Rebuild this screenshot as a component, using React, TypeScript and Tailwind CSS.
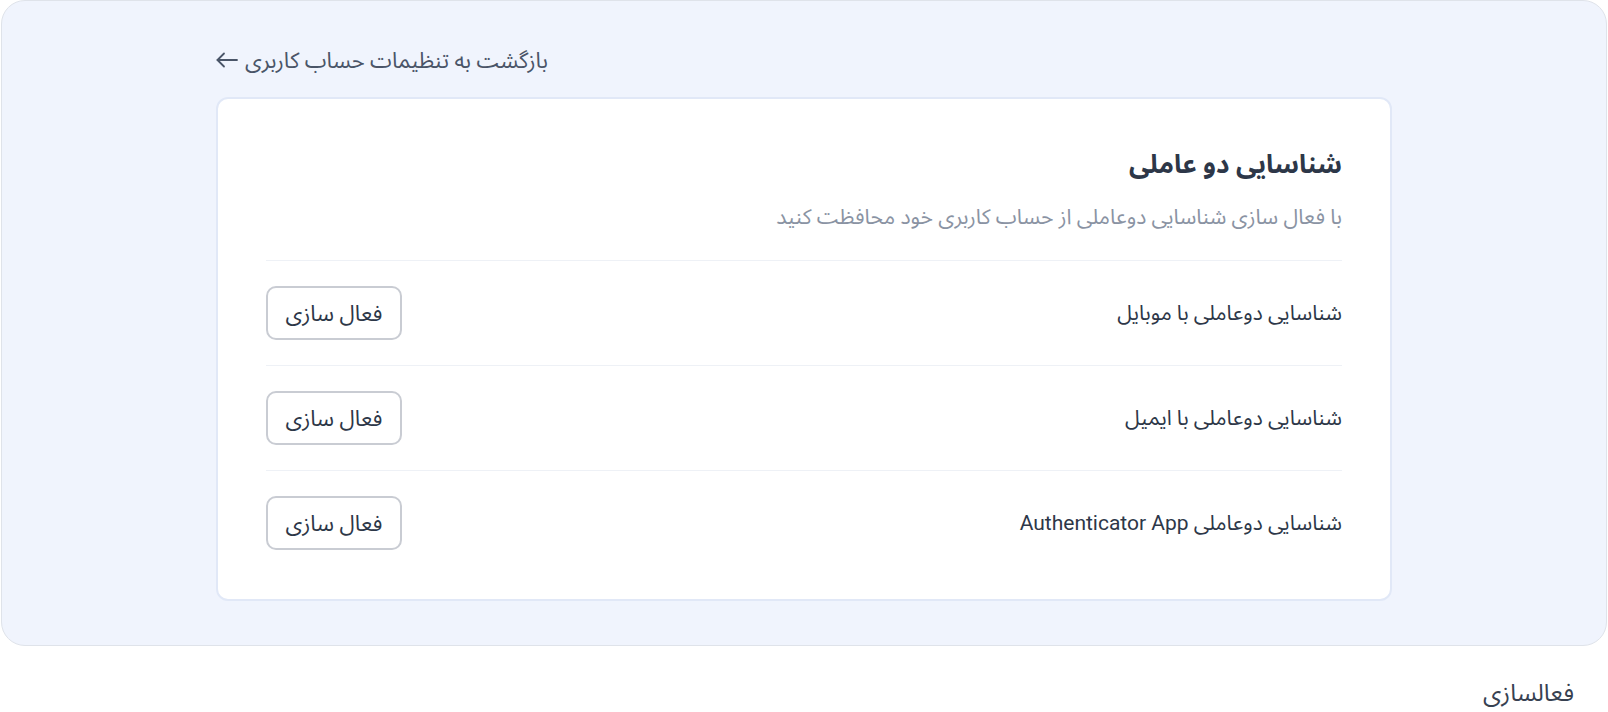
const methods = [
  'شناسایی دوعاملی با موبایل',
  'شناسایی دوعاملی با ایمیل',
  'شناسایی دوعاملی Authenticator App',
];

function BackArrow() {
  return (
    <svg width="22" height="16" viewBox="0 0 22 16" fill="none" stroke="currentColor" strokeWidth="1.8" strokeLinecap="round" strokeLinejoin="round">
      <path d="M21 8H1.5" />
      <path d="M8 1.5L1.5 8L8 14.5" />
    </svg>
  );
}

export default function App() {
  return (
    <div
      dir="rtl"
      className="min-h-[712px] bg-white text-[#2d3748]"
      style={{ fontFamily: 'Roboto, "Noto Sans Arabic", "DejaVu Sans", sans-serif' }}
    >
      <div className="mx-px h-[646px] rounded-[24px] border border-[#dfe3ea] bg-[#f0f4fd] pt-[45px]">
        <div className="mx-auto w-[1176px]">
          <div className="flex justify-end">
            <a className="flex h-7 items-center gap-[7px] text-[22px] text-[#4a5568]">
              <span>بازگشت به تنظیمات حساب کاربری</span>
              <BackArrow />
            </a>
          </div>

          <div className="mt-[23px] rounded-[12px] border-2 border-[#e1e8f7] bg-white px-12 pt-[49px] pb-[24px]">
            <h1 className="text-[26px] leading-8 font-bold text-[#2d3748]">شناسایی دو عاملی</h1>
            <p className="mt-[23px] text-[21.2px] leading-7 text-[#8a93a3]">
              با فعال سازی شناسایی دوعاملی از حساب کاربری خود محافظت کنید
            </p>

            <div className="mt-[29px] border-t border-[#eef1f6]">
              {methods.map((m, i) => (
                <div
                  key={m}
                  className={
                    'flex items-center justify-between py-[25px] ' +
                    (i < methods.length - 1 ? 'border-b border-[#eef1f6]' : '')
                  }
                >
                  <span className="text-[21px] leading-7 text-[#2d3748]">{m}</span>
                  <button
                    type="button"
                    className="flex h-[54px] w-[136px] items-center justify-center rounded-[10px] border-2 border-[#c9ccd3] text-[22px] text-[#2d3748]"
                  >
                    فعال سازی
                  </button>
                </div>
              ))}
            </div>
          </div>
        </div>
      </div>

      <div className="mt-[33px] pr-[34px] text-[24px] leading-7 text-[#374151]">فعالسازی</div>
    </div>
  );
}
